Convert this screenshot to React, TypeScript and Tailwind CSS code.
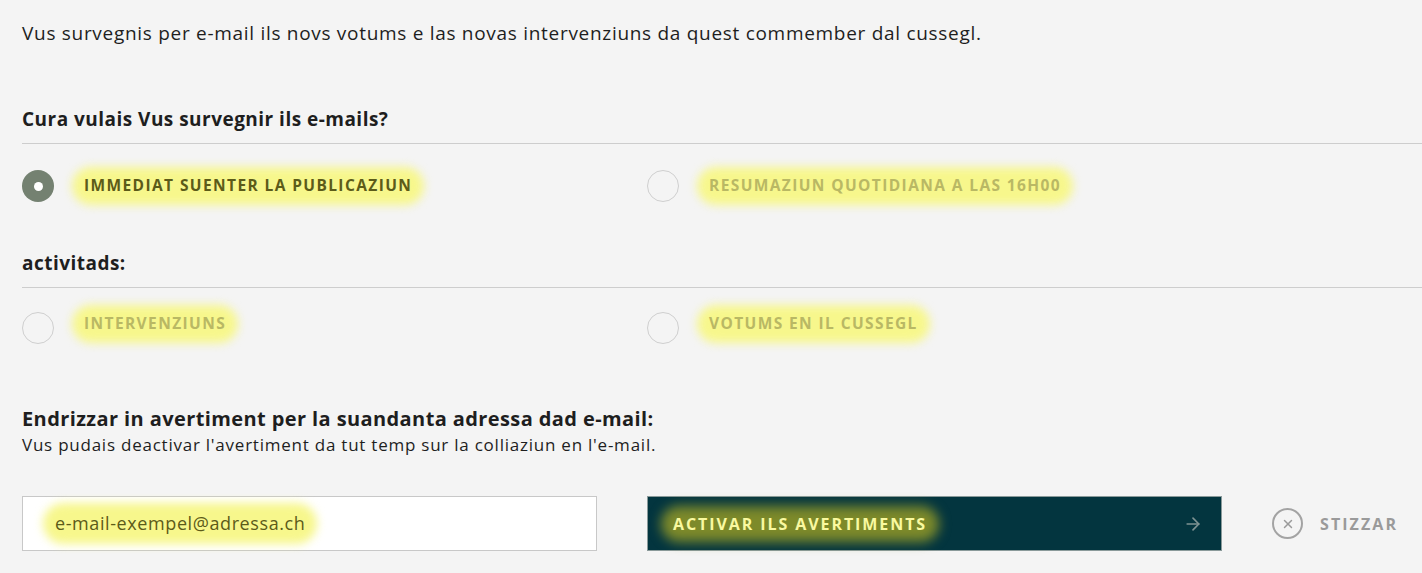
import { ArrowRight, X } from "lucide-react";

const font = { fontFamily: '"Open Sans", "Noto Sans", sans-serif' };

function Glow({ children, className = "" }: { children: React.ReactNode; className?: string }) {
  return (
    <span className={`relative inline-block ${className}`}>
      <span className="absolute -inset-x-3 -inset-y-[7px] rounded-full bg-[#f7f78c] blur-[5px]" />
      <span className="relative">{children}</span>
    </span>
  );
}

function Radio({ label, checked, lift }: { label: string; checked?: boolean; lift?: boolean }) {
  return (
    <label className="flex items-center gap-[30px] h-[34px]">
      {checked ? (
        <span className="w-8 h-8 rounded-full bg-[#748171] flex items-center justify-center">
          <span className="w-[9px] h-[9px] rounded-full bg-white" />
        </span>
      ) : (
        <span className="w-8 h-8 rounded-full border border-[#cfcfcf] bg-[#f4f4f4]" />
      )}
      <Glow
        className={`text-[15.5px] font-bold tracking-[0.09em] uppercase ${lift ? "-translate-y-[4px]" : ""} ${
          checked ? "text-[#5c5b19]" : "text-[#b9b864]"
        }`}
      >
        {label}
      </Glow>
    </label>
  );
}

export default function App() {
  return (
    <div className="w-[1422px] h-[573px] bg-[#f4f4f4] text-[#1e1e1e] pl-[22px] overflow-hidden" style={font}>
      <p className="pt-[19px] text-[19px] leading-[28px] tracking-[0.037em]">
        Vus survegnis per e-mail ils novs votums e las novas intervenziuns da quest commember dal cussegl.
      </p>

      <h2 className="mt-[58px] text-[19px] font-bold leading-[28px] tracking-[0.025em]">
        Cura vulais Vus survegnir ils e-mails?
      </h2>
      <div className="mt-[10px] border-t border-[#cdcdcd]" />
      <div className="grid grid-cols-[575px_575px] gap-x-[50px] mt-[25px]">
        <Radio label="Immediat suenter la publicaziun" checked />
        <Radio label="Resumaziun quotidiana a las 16h00" />
      </div>

      <h2 className="mt-[46px] text-[19px] font-bold leading-[28px] tracking-[0.025em]">activitads:</h2>
      <div className="mt-[10px] border-t border-[#cdcdcd]" />
      <div className="grid grid-cols-[575px_575px] gap-x-[50px] mt-[23px]">
        <Radio label="Intervenziuns" lift />
        <Radio label="Votums en il cussegl" lift />
      </div>

      <h2 className="mt-[60px] text-[20px] font-bold leading-[28px] tracking-[0.02em]">
        Endrizzar in avertiment per la suandanta adressa dad e-mail:
      </h2>
      <p className="mt-[1px] text-[17px] leading-[22px] tracking-[0.045em]">
        Vus pudais deactivar l'avertiment da tut temp sur la colliaziun en l'e-mail.
      </p>

      <div className="mt-[40px] flex items-center">
        <div className="w-[575px] h-[55px] bg-white border border-[#c8c8c8] flex items-center pl-[32px]">
          <Glow className="text-[18px] tracking-[0.033em] text-[#5c5b19]">e-mail-exempel@adressa.ch</Glow>
        </div>
        <button className="ml-[50px] w-[575px] h-[55px] bg-[#03353f] border border-[#8a9a9a] flex items-center justify-between pl-[25px] pr-[18px]">
          <span className="relative inline-block text-[16px] font-bold tracking-[0.12em] text-[#f9f9a0]">
            <span className="absolute -inset-x-3 -inset-y-[6px] rounded-full bg-[#7d8a2a] blur-[6px]" />
            <span className="relative">ACTIVAR ILS AVERTIMENTS</span>
          </span>
          <ArrowRight size={20} strokeWidth={2} className="text-[#7f9393]" />
        </button>
        <div className="ml-[50px] flex items-center gap-[17px] text-[#9a9a9a]">
          <span className="w-[31px] h-[31px] rounded-full border-[2.5px] border-[#a3a3a3] flex items-center justify-center">
            <X size={14} strokeWidth={2.5} />
          </span>
          <span className="text-[16px] font-bold tracking-[0.13em]">STIZZAR</span>
        </div>
      </div>
    </div>
  );
}
